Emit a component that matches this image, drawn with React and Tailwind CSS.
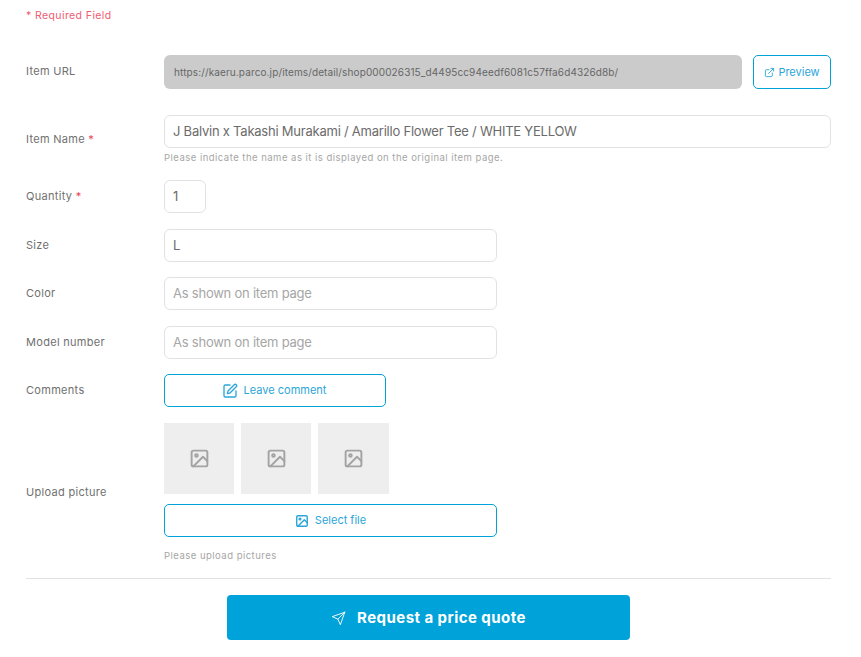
import React from "react";
import { FiExternalLink, FiImage, FiSend } from "react-icons/fi";
import { SquarePen } from "lucide-react";

const Label = ({ children, required, className = "" }) => (
  <div className={`w-[138px] shrink-0 text-[11px] tracking-[0.3px] text-[#707070] ${className}`}>
    {children}
    {required && <span className="text-[#e8425a]"> *</span>}
  </div>
);

const Field = ({ value, placeholder, className = "" }) => (
  <div
    className={`h-[33px] flex items-center rounded-[6px] border border-[#e2e2e2] bg-white px-2 text-[13px] tracking-[-0.23px] ${className} ${
      value ? "text-[#6b6b6b]" : "text-[#a6a6a6]"
    }`}
  >
    {value || placeholder}
  </div>
);

const OutlineButton = ({ icon, children, className = "" }) => (
  <div
    className={`h-[33px] flex items-center justify-center gap-[6px] rounded-[5px] border border-[#00a3d9] bg-white text-[11px] text-[#2ba6d9] ${className}`}
  >
    {icon}
    {children}
  </div>
);

const Thumb = ({ className = "" }) => (
  <div className={`h-[71px] flex items-center justify-center bg-[#eeeeee] ${className}`}>
    <FiImage className="text-[#a3a3a3]" size={21} strokeWidth={2.2} />
  </div>
);

const Hint = ({ children, className = "" }) => (
  <p className={`h-[14px] text-[9.5px] leading-[14px] tracking-[0.48px] text-[#a6a6a6] ${className}`}>{children}</p>
);

export default function App() {
  return (
    <div className="h-[657px] bg-white pl-[26px] pr-[30px] font-['Inter','Liberation_Sans',sans-serif]">
      <div className="pt-[8px] h-[55px] text-[10.5px] tracking-[0.4px] text-[#ef5b72]">* Required Field</div>

      {/* ITEM URL */}
      <div className="flex items-center h-[34px]">
        <Label className="pb-[2px]">Item URL</Label>
        <div className="h-[34px] w-[578px] flex items-center rounded-[6px] bg-[#cbcbcb] pl-[10px] text-[10px] tracking-[0.12px] text-[#666666]">
          https://kaeru.parco.jp/items/detail/shop000026315_d4495cc94eedf6081c57ffa6d4326d8b/
        </div>
        <OutlineButton
          icon={<FiExternalLink size={11} />}
          className="h-[34px] w-[78px] ml-[11px] !gap-[3px]"
        >
          Preview
        </OutlineButton>
      </div>

      {/* ITEM NAME */}
      <div className="flex items-center mt-[26px]">
        <Label required className="pb-[2px]">Item Name</Label>
        <div className="flex-1">
          <Field value="J Balvin x Takashi Murakami / Amarillo Flower Tee / WHITE YELLOW" />
          <Hint className="mt-[3px]">Please indicate the name as it is displayed on the original item page.</Hint>
        </div>
      </div>

      <div className="flex items-center mt-[15px]">
        <Label required>Quantity</Label>
        <Field className="w-[42px]" value="1" />
      </div>

      <div className="flex items-center mt-[16px]">
        <Label>Size</Label>
        <Field className="w-[333px]" value="L" />
      </div>

      <div className="flex items-center mt-[15px]">
        <Label>Color</Label>
        <Field className="w-[333px]" placeholder="As shown on item page" />
      </div>

      <div className="flex items-center mt-[16px]">
        <Label>Model number</Label>
        <Field className="w-[333px]" placeholder="As shown on item page" />
      </div>

      <div className="flex items-center mt-[15px]">
        <Label>Comments</Label>
        <OutlineButton icon={<SquarePen size={16} strokeWidth={2} />} className="w-[222px] pr-[2px]">
          Leave comment
        </OutlineButton>
      </div>

      {/* UPLOAD */}
      <div className="flex items-center mt-[16px]">
        <Label className="pb-[2px]">Upload picture</Label>
        <div>
          <div className="flex gap-[7px]">
            <Thumb className="w-[70px]" />
            <Thumb className="w-[70px]" />
            <Thumb className="w-[71px]" />
          </div>
          <OutlineButton icon={<FiImage size={14} strokeWidth={2.4} />} className="w-[333px] mt-[10px]">
            Select file
          </OutlineButton>
          <Hint className="mt-[12px]">Please upload pictures</Hint>
        </div>
      </div>

      <hr className="mt-[15px] border-[#e2e2e2]" />

      <div className="flex justify-center mt-[16px]">
        <div className="h-[45px] w-[403px] pt-[1px] flex items-center justify-center gap-[11px] rounded-[4px] bg-[#00a3d9] text-[15px] tracking-[0.45px] font-bold text-white">
          <FiSend size={15} strokeWidth={1.5} />
          Request a price quote
        </div>
      </div>
    </div>
  );
}
